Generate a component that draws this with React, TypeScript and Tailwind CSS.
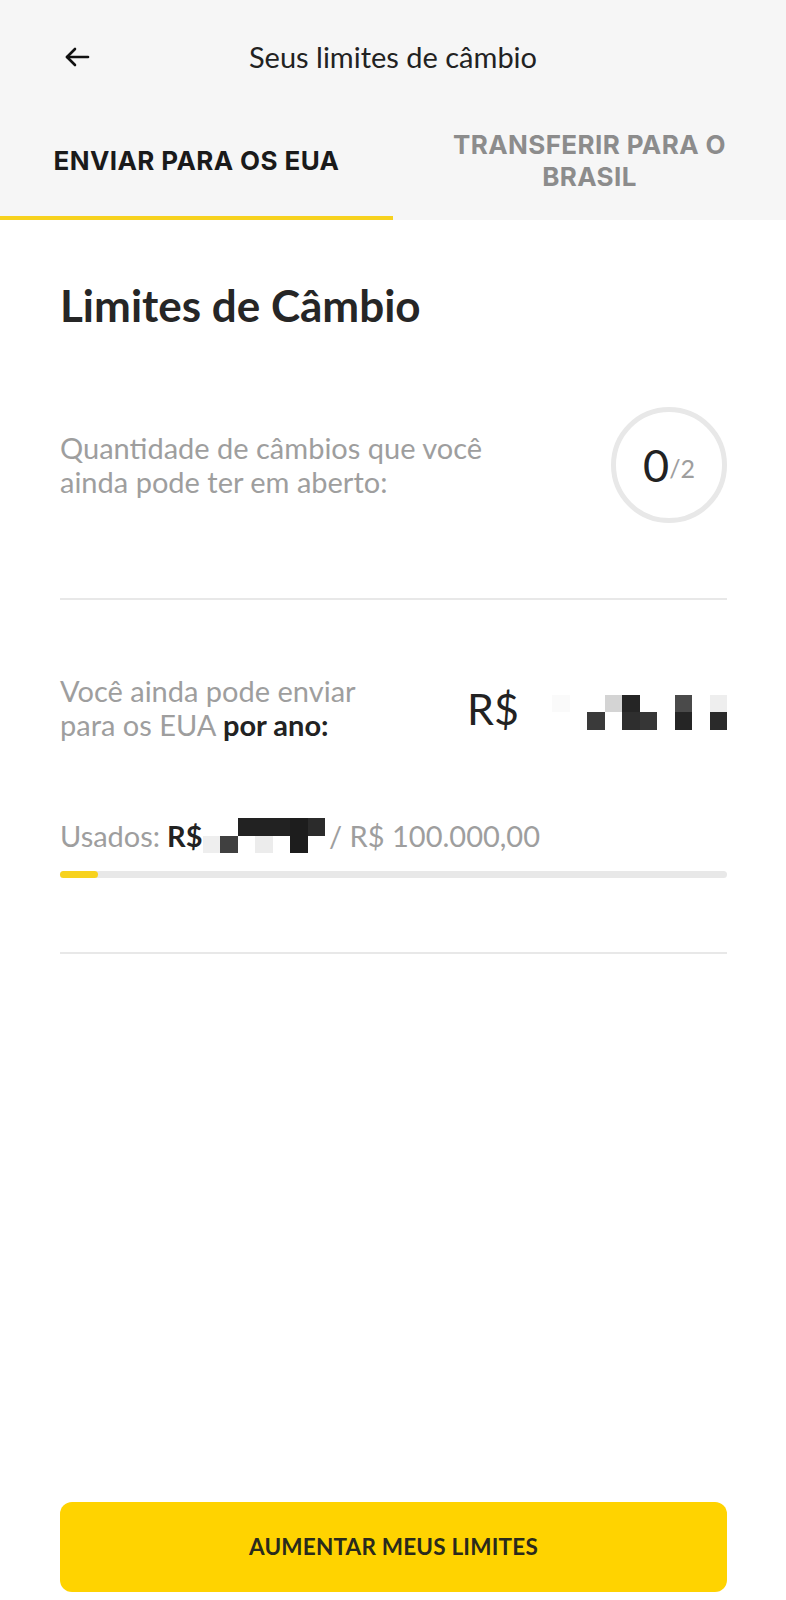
import React from 'react';

const lato = { fontFamily: 'Lato, "Open Sans", sans-serif' };

function Mosaic({ cols, cells }: { cols: number; cells: (string | null)[] }) {
  return (
    <div className="grid shrink-0" style={{ gridTemplateColumns: `repeat(${cols}, 17.5px)`, gridAutoRows: '17.5px' }}>
      {cells.map((c, i) => (
        <div key={i} style={{ background: c ?? 'transparent' }} />
      ))}
    </div>
  );
}

function App() {
  const bigMosaic = [
    '#fafafa', null, null, '#d4d4d4', '#252525', null, null, '#4a4a4a', null, '#eeeeee',
    null, null, '#3a3a3a', null, '#2e2e2e', '#363636', null, '#252525', null, '#2a2a2a',
  ];
  const smallMosaic = [
    null, null, '#222222', '#222222', '#222222', '#1d1d1d', '#2b2b2b',
    '#eeeeee', '#404040', null, '#ececec', null, '#1d1d1d', null,
  ];

  return (
    <div className="min-h-screen flex flex-col bg-white" style={lato}>
      {/* Header */}
      <div className="bg-[#f6f6f6]">
        <div className="relative h-[114px] flex items-center justify-center">
          <button className="absolute left-[64px] top-[46px]">
            <svg width="26" height="22" viewBox="0 0 26 22" fill="none" stroke="#111" strokeWidth="2.6" strokeLinecap="round" strokeLinejoin="round">
              <path d="M24 11H3" />
              <path d="M11 3L3 11L11 19" />
            </svg>
          </button>
          <h1 className="text-[29px] text-[#222]">Seus limites de câmbio</h1>
        </div>
        <div className="grid grid-cols-2" style={{ fontFamily: 'Inter, sans-serif' }}>
          <div className="flex flex-col">
            <div className="h-[102px] pb-[10px] flex items-center justify-center text-[26px] font-bold text-[#1a1a1a] tracking-[0.4px]">
              ENVIAR PARA OS EUA
            </div>
            <div className="h-[4px] bg-[#f7d21e]" />
          </div>
          <div className="flex flex-col">
            <div className="h-[102px] pb-[8px] flex items-center justify-center text-center text-[26px] leading-[32px] font-bold text-[#8c8c8c] tracking-[0.4px]">
              TRANSFERIR PARA O<br />BRASIL
            </div>
            <div className="h-[4px]" />
          </div>
        </div>
      </div>

      {/* Content */}
      <div className="flex-1 pl-[60px] pr-[59px] pt-[59px]">
        <h2 className="text-[44px] leading-[52px] font-bold text-[#262626]">Limites de Câmbio</h2>

        <div className="mt-[76px] flex items-center justify-between">
          <p className="text-[29px] leading-[34px] text-[#9e9e9e]">
            Quantidade de câmbios que você<br />ainda pode ter em aberto:
          </p>
          <div className="w-[116px] h-[116px] rounded-full border-[5px] border-[#e8e8e8] flex items-center justify-center">
            <span className="text-[45px] leading-none text-[#222]">0</span>
            <span className="text-[25px] leading-none text-[#9e9e9e] mt-[6px]">/2</span>
          </div>
        </div>

        <div className="mt-[75px] h-[2px] bg-[#e8e8e8]" />

        <div className="mt-[74px] flex items-center justify-between">
          <p className="text-[29px] leading-[34px] text-[#9e9e9e]">
            Você ainda pode enviar<br />para os EUA <span className="font-bold text-[#222]">por ano:</span>
          </p>
          <div className="flex items-center gap-[33px]">
            <span className="text-[43px] leading-none text-[#222]">R$</span>
            <div className="mt-[8px]">
              <Mosaic cols={10} cells={bigMosaic} />
            </div>
          </div>
        </div>

        <div className="mt-[76px] flex items-center text-[29px] leading-[34px] text-[#9e9e9e]">
          <span>Usados:</span>
          <span className="ml-[7px] font-bold text-[#222]">R$</span>
          <Mosaic cols={7} cells={smallMosaic} />
          <span className="ml-[4px]">/ R$ 100.000,00</span>
        </div>

        <div className="mt-[18px] h-[7px] rounded-full bg-[#e8e8e8]">
          <div className="h-full w-[38px] rounded-full bg-[#f7d21e]" />
        </div>

        <div className="mt-[74px] h-[2px] bg-[#e8e8e8]" />
      </div>

      {/* Bottom action */}
      <div className="pl-[60px] pr-[59px] pb-[8px]">
        <button className="w-full h-[90px] rounded-[12px] bg-[#ffd300] text-[22.5px] font-bold text-[#2a2a1c] tracking-[0.2px]">
          AUMENTAR MEUS LIMITES
        </button>
      </div>
    </div>
  );
}

export default App;
